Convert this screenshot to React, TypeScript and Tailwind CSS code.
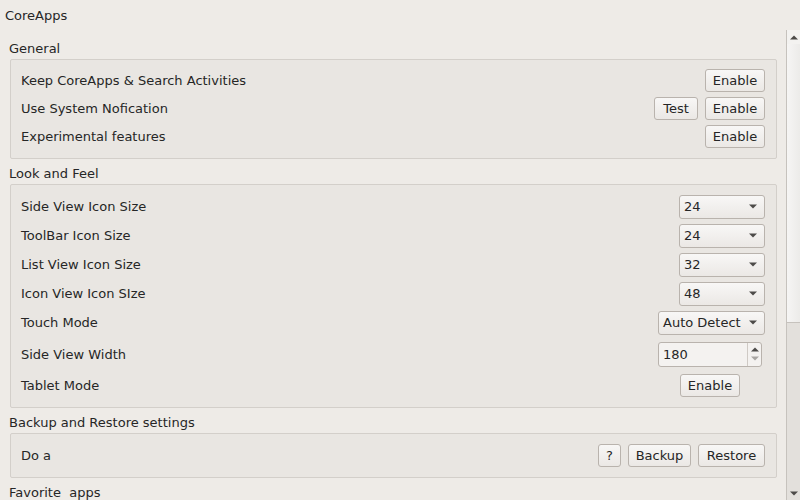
import React from 'react';

const font = { fontFamily: '"DejaVu Sans", Verdana, sans-serif' };

function Btn({ children, w }: { children: React.ReactNode; w: string }) {
  return (
    <button
      className={`h-[23px] ${w} shrink-0 rounded-[3px] border border-[#b9b3ad] bg-gradient-to-b from-[#f8f7f6] to-[#ebe8e5] text-[13px] leading-none text-[#262626] flex items-center justify-center`}
    >
      {children}
    </button>
  );
}

function Arrow({ light }: { light?: boolean }) {
  return (
    <svg width="8" height="5" viewBox="0 0 8 5">
      <path d="M0 0.5 L8 0.5 L4 4.5 Z" fill={light ? '#a9a6a3' : '#4d4b49'} />
    </svg>
  );
}

function Combo({ value, w }: { value: string; w: string }) {
  return (
    <div
      className={`h-[24px] ${w} shrink-0 rounded-[3px] border border-[#b9b3ad] bg-gradient-to-b from-[#f8f7f6] to-[#ebe8e5] flex items-center pl-[4px] pr-[7px] text-[13px] text-[#262626]`}
    >
      <span className="flex-1">{value}</span>
      <Arrow />
    </div>
  );
}

function SpinBox({ value }: { value: string }) {
  return (
    <div className="mr-[3px] h-[25px] w-[104px] shrink-0 rounded-[3px] border border-[#b9b3ad] bg-[#f4f2f0] flex text-[13px] text-[#262626]">
      <div className="flex-1 flex items-center pl-[4px] pt-[2px]">{value}</div>
      <div className="w-[14px] border-l border-[#cfcac5] flex flex-col items-center justify-center gap-[4px]">
        <svg width="8" height="5" viewBox="0 0 8 5">
          <path d="M0 4.5 L8 4.5 L4 0.5 Z" fill="#4d4b49" />
        </svg>
        <Arrow light />
      </div>
    </div>
  );
}

function Row({ label, h, low, children }: { label: string; h: string; low?: boolean; children?: React.ReactNode }) {
  return (
    <div className={`${h} flex items-center`}>
      <span className={`flex-1 text-[13px] text-[#262626] ${low ? 'pt-[2px]' : ''}`}>{label}</span>
      <div className="flex items-center gap-[7px]">{children}</div>
    </div>
  );
}

function Section({ title, first, children, box }: { title: string; first?: boolean; children?: React.ReactNode; box?: string }) {
  return (
    <div className={first ? '' : 'mt-[5px]'}>
      <div className="h-[20px] -ml-px flex items-center whitespace-pre text-[13px] text-[#262626]">{title}</div>
      {children && (
        <div className={`rounded-[2px] border border-[#d3cfca] bg-[#e9e6e2] pl-[10px] pr-[11px] ${box ?? 'pt-[6px] pb-[8px]'}`}>
          {children}
        </div>
      )}
    </div>
  );
}

export default function App() {
  return (
    <div className="w-[800px] h-[500px] overflow-hidden bg-[#eeebe7] flex flex-col" style={font}>
      <div className="h-[30px] shrink-0 flex items-center pl-[5px] pt-[2px] text-[13px] text-[#262626]">CoreApps</div>
      <div className="flex-1 flex min-h-0">
        <div className="flex-1 overflow-hidden pt-[9px] pl-[10px] pr-[9px]">
          <Section title="General" first>
            <Row label="Keep CoreApps & Search Activities" h="h-[28px]" low>
              <Btn w="w-[60px]">Enable</Btn>
            </Row>
            <Row label="Use System Nofication" h="h-[28px]" low>
              <Btn w="w-[44px]">Test</Btn>
              <Btn w="w-[60px]">Enable</Btn>
            </Row>
            <Row label="Experimental features" h="h-[28px]" low>
              <Btn w="w-[60px]">Enable</Btn>
            </Row>
          </Section>
          <Section title="Look and Feel" box="pt-[7px] pb-[8px]">
            <Row label="Side View Icon Size" h="h-[29px]">
              <Combo value="24" w="w-[86px]" />
            </Row>
            <Row label="ToolBar Icon Size" h="h-[29px]">
              <Combo value="24" w="w-[86px]" />
            </Row>
            <Row label="List View Icon Size" h="h-[29px]">
              <Combo value="32" w="w-[86px]" />
            </Row>
            <Row label="Icon View Icon SIze" h="h-[29px]">
              <Combo value="48" w="w-[86px]" />
            </Row>
            <Row label="Touch Mode" h="h-[29px]">
              <Combo value="Auto Detect" w="w-[107px]" />
            </Row>
            <Row label="Side View Width" h="h-[34px]" low>
              <SpinBox value="180" />
            </Row>
            <Row label="Tablet Mode" h="h-[28px]" low>
              <div className="mr-[25px]">
                <Btn w="w-[60px]">Enable</Btn>
              </div>
            </Row>
          </Section>
          <Section title="Backup and Restore settings" box="pt-[7px] pb-[8px]">
            <Row label="Do a" h="h-[28px]" low>
              <Btn w="w-[23px]">?</Btn>
              <Btn w="w-[63px]">Backup</Btn>
              <Btn w="w-[67px]">Restore</Btn>
            </Row>
          </Section>
          <Section title="Favorite  apps" />
        </div>
        <div className="w-[14px] shrink-0 border-l border-[#c6c2bd] bg-[#e3e0dc] flex flex-col">
          <div className="h-[14px] flex items-center justify-center bg-[#f3f2f0]">
            <svg width="8" height="5" viewBox="0 0 8 5">
              <path d="M0 4.5 L8 4.5 L4 0.5 Z" fill="#4d4b49" />
            </svg>
          </div>
          <div className="h-[279px] border-b border-[#c6c2bd] bg-gradient-to-r from-[#f6f5f4] to-[#ecebe9]" />
          <div className="flex-1" />
          <div className="h-[14px] flex items-center justify-center">
            <Arrow />
          </div>
        </div>
      </div>
    </div>
  );
}
